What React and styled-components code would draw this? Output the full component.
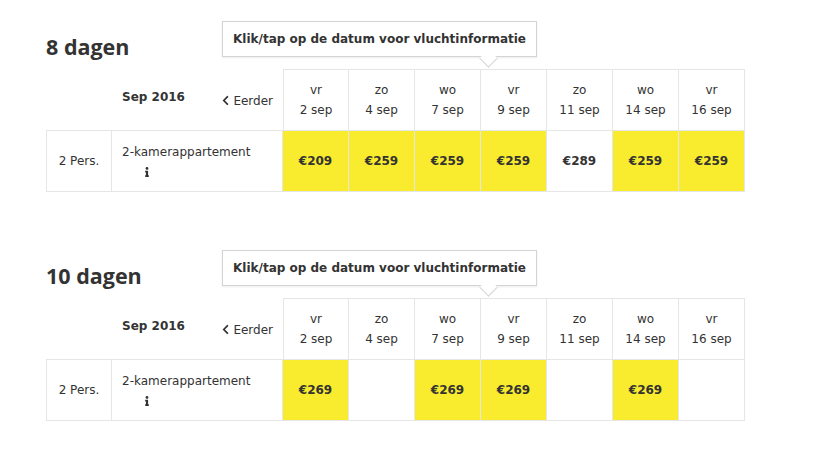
import React from 'react'
import styled, { createGlobalStyle } from 'styled-components'
import { FaChevronLeft, FaInfo } from 'react-icons/fa'

const GlobalStyle = createGlobalStyle`
  body {
    margin: 0;
    background: #fff;
    color: #333;
    font-family: "DejaVu Sans", Verdana, sans-serif;
  }
`

const days = [
  { day: 'vr', date: '2 sep' },
  { day: 'zo', date: '4 sep' },
  { day: 'wo', date: '7 sep' },
  { day: 'vr', date: '9 sep' },
  { day: 'zo', date: '11 sep' },
  { day: 'wo', date: '14 sep' },
  { day: 'vr', date: '16 sep' },
]

const sections = [
  { title: '8 dagen', prices: ['€209', '€259', '€259', '€259', '€289', '€259', '€259'], offers: [1, 1, 1, 1, 0, 1, 1] },
  { title: '10 dagen', prices: ['€269', '', '€269', '€269', '', '€269', ''], offers: [1, 0, 1, 1, 0, 1, 0] },
]

const App = () => {
  return (
    <Page>
      <GlobalStyle />
      {sections.map((s, i) => (
        <Section key={i}>
          <TitleRow>
            <Heading>{s.title}</Heading>
            <Tooltip>Klik/tap op de datum voor vluchtinformatie</Tooltip>
          </TitleRow>
          <Grid>
            <Blank />
            <MonthCell>
              <Month>Sep 2016</Month>
              <Earlier><FaChevronLeft size={11} />Eerder</Earlier>
            </MonthCell>
            {days.map((d, j) => (
              <DateCell key={j}>
                <span>{d.day}</span>
                <span>{d.date}</span>
              </DateCell>
            ))}
            <PersCell>2 Pers.</PersCell>
            <RoomCell>
              <span>2-kamerappartement</span>
              <InfoIcon><FaInfo size={10} /></InfoIcon>
            </RoomCell>
            {s.prices.map((p, j) => (
              <PriceCell key={j} $offer={s.offers[j]}>{p}</PriceCell>
            ))}
          </Grid>
        </Section>
      ))}
    </Page>
  )
}

export default App

const Page = styled.div`
  padding: 21px 0 0 46px;
  display: flex;
  flex-direction: column;
  gap: 58px;
`

const Section = styled.div`
  position: relative;
  width: 699px;
`

const TitleRow = styled.div`
  height: 48px;
  display: flex;
  align-items: flex-end;
`

const Heading = styled.h2`
  margin: 0 0 9px;
  font-family: "Open Sans", sans-serif;
  font-weight: 700;
  font-size: 21.5px;
  line-height: 26px;
  color: #333;
`

const Tooltip = styled.div`
  position: absolute;
  top: 0;
  left: 176px;
  width: 315px;
  height: 36px;
  box-sizing: border-box;
  border: 1px solid #d4d4d4;
  background: #fff;
  display: flex;
  align-items: center;
  justify-content: center;
  font-size: 12px;
  font-weight: 700;
  color: #333;
  box-shadow: 0 1px 2px rgba(0, 0, 0, 0.08);

  &::after {
    content: '';
    position: absolute;
    left: 259px;
    bottom: -9px;
    width: 12px;
    height: 12px;
    background: #fff;
    border-right: 1px solid #d4d4d4;
    border-bottom: 1px solid #d4d4d4;
    transform: rotate(45deg);
  }
`

const Grid = styled.div`
  display: grid;
  grid-template-columns: 66px 171px repeat(7, 66px);
  grid-template-rows: 61px 62px;
  font-size: 12px;
`

const Blank = styled.div``

const MonthCell = styled.div`
  display: flex;
  justify-content: space-between;
  align-items: center;
  padding: 0 10px 0 10px;
`

const Month = styled.span`
  font-weight: 700;
  margin-top: -6px;
`

const Earlier = styled.span`
  display: flex;
  align-items: center;
  gap: 2px;
  font-size: 12px;
  margin-top: 2px;

  svg {
    color: #333;
  }
`

const DateCell = styled.div`
  display: flex;
  flex-direction: column;
  align-items: center;
  justify-content: center;
  line-height: 20px;
  border: 1px solid #e6e6e6;
  border-bottom: none;
  margin-left: -1px;
  &:nth-child(3) {
    margin-left: 0;
  }
`

const bodyCell = `
  border: 1px solid #e6e6e6;
  margin-left: -1px;
  display: flex;
  align-items: center;
  justify-content: center;
`

const PersCell = styled.div`
  ${bodyCell}
  margin-left: 0;
`

const RoomCell = styled.div`
  ${bodyCell}
  flex-direction: column;
  align-items: flex-start;
  justify-content: flex-start;
  padding: 13px 10px 0;
  line-height: 16px;
`

const InfoIcon = styled.span`
  margin: 5px 0 0 20px;
  color: #333;
`

const PriceCell = styled.div`
  ${bodyCell}
  font-weight: 700;
  background: ${p => (p.$offer ? '#f9eb2d' : '#fff')};
`
